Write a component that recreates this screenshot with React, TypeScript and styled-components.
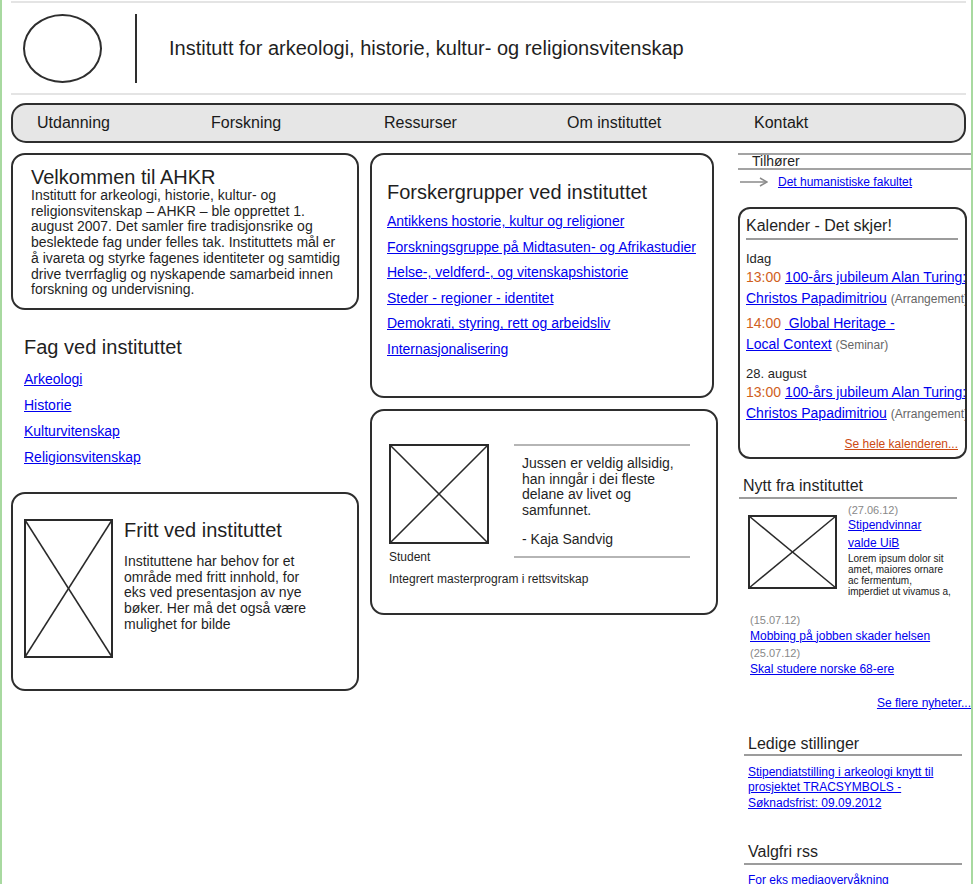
import React from 'react'
import styled, { createGlobalStyle } from 'styled-components'

const GlobalStyle = createGlobalStyle`
html, body {
  margin: 0;
  padding: 0;
  background: #fff;
}
body {
  font-family: "Liberation Sans", Arial, Helvetica, sans-serif;
  color: #1f1f1f;
}
a {
  color: #0000ee;
}
`

const Frame = styled.div`
  width: 973px;
  min-height: 884px;
  box-sizing: border-box;
  border-left: 2px solid #a8d9a0;
  border-right: 2px solid #a8d9a0;
  padding: 1px 0 0 9px;
`

const Rule = styled.div`
  height: 2px;
  margin-right: 5px;
  background: #e4e4e4;
`

const Header = styled.header`
  display: flex;
  align-items: center;
  height: 90px;
  padding-left: 12px;
`

const Logo = styled.div`
  width: 79px;
  height: 69px;
  box-sizing: border-box;
  border: 2px solid #2e2e2e;
  border-radius: 50%;
`

const Divider = styled.div`
  width: 2px;
  height: 69px;
  background: #2e2e2e;
  margin: 0 32px 0 33px;
`

const Title = styled.h1`
  margin: 0;
  font-size: 20px;
  line-height: 23px;
  font-weight: normal;
  color: #1f1f1f;
`

const Nav = styled.nav`
  margin: 8px 5px 0 0;
  height: 40px;
  box-sizing: border-box;
  border: 2px solid #2e2e2e;
  border-radius: 15px;
  background: #e6e6e6;
  display: grid;
  grid-template-columns: 174px 173px 183px 187px 1fr;
  align-items: center;
  padding: 0 0 1px 24px;
`

const NavItem = styled.a`
  font-size: 16px;
  line-height: 18px;
  color: #1a1a1a;
  text-decoration: none;
`

const Main = styled.div`
  display: grid;
  grid-template-columns: 348px 348px 1fr;
  column-gap: 11px;
  align-items: start;
  margin-top: 10px;
`

const Column = styled.div`
  display: flex;
  flex-direction: column;
`

const SideColumn = styled.aside`
  display: flex;
  flex-direction: column;
  margin-left: 9px;
`

const Card = styled.section<{ $w?: number; $h?: number }>`
  box-sizing: border-box;
  width: ${p => p.$w ?? 348}px;
  ${p => (p.$h ? `height: ${p.$h}px;` : '')}
  border: 2px solid #2e2e2e;
  border-radius: 14px;
  background: #fff;
`

const WelcomeCard = styled(Card)`
  padding: 11px 14px 10px 18px;
`

const BigHeading = styled.h2`
  margin: 0;
  font-size: 20px;
  line-height: 23px;
  font-weight: normal;
  color: #1f1f1f;
`

const Body = styled.p<{ $lh?: number }>`
  margin: 0;
  font-size: 14px;
  line-height: ${p => p.$lh ?? 16}px;
`

const WelcomeBody = styled(Body)`
  margin-top: -1px;
`

const LinkList = styled.div<{ $gap: number }>`
  display: flex;
  flex-direction: column;
  align-items: flex-start;
  gap: ${p => p.$gap}px;
  a {
    font-size: 14px;
    line-height: 16px;
  }
`

const FagSection = styled.section`
  margin-top: 26px;
  padding-left: 13px;
  ${BigHeading} {
    margin-bottom: 12px;
  }
`

const FreeCard = styled(Card)`
  margin-top: 27px;
  display: flex;
  align-items: flex-start;
  gap: 11px;
  padding: 25px 0 0 11px;
`

const FreeText = styled.div`
  width: 195px;
  ${BigHeading} {
    margin-bottom: 12px;
  }
`

const GroupCard = styled(Card)`
  padding: 26px 14px 39px 15px;
  ${BigHeading} {
    margin-bottom: 9px;
  }
`

const QuoteCard = styled(Card)`
  margin-top: 11px;
  padding: 33px 20px 27px 17px;
`

const QuoteRow = styled.div`
  display: flex;
  align-items: flex-start;
`

const Caption = styled.div`
  font-size: 12px;
  line-height: 14px;
  color: #1f1f1f;
`

const Figure = styled.div`
  display: flex;
  flex-direction: column;
  ${Caption} {
    margin-top: 6px;
  }
`

const Quote = styled.blockquote`
  margin: 0 0 0 25px;
  width: 176px;
  box-sizing: border-box;
  border-top: 2px solid #b5b5b5;
  border-bottom: 2px solid #b5b5b5;
  padding: 10px 8px 9px 8px;
  font-size: 14px;
  line-height: 15.7px;
  p {
    margin: 0;
  }
  p + p {
    margin-top: 13px;
  }
`

const Program = styled(Caption)`
  margin-top: 8px;
`

const Belongs = styled.div`
  border-top: 2px solid #a3a3a3;
  border-bottom: 2px solid #a3a3a3;
  padding-left: 14px;
  font-size: 14px;
  line-height: 13px;
`

const ArrowRow = styled.div`
  display: flex;
  align-items: center;
  gap: 10px;
  margin-top: 5px;
  padding-left: 2px;
  a {
    font-size: 12px;
    line-height: 14px;
  }
`

const CalendarCard = styled(Card)`
  margin-top: 18px;
  width: 229px;
  border-radius: 12px;
  overflow: hidden;
  padding: 8px 7px 6px 6px;
`

const SideHeading = styled.h3<{ $inset?: number; $end?: number }>`
  margin: 0 ${p => p.$end ?? 0}px 0 ${p => p.$inset ?? 0}px;
  font-size: 16px;
  line-height: 18.4px;
  font-weight: normal;
  color: #1f1f1f;
  border-bottom: 2px solid #9c9c9c;
  padding: 0 0 1px 4px;
`

const CalendarHeading = styled(SideHeading)`
  padding: 0 0 3px 0;
  margin-bottom: 2px;
`

const DayLabel = styled.div`
  margin-top: 10px;
  font-size: 13px;
  line-height: 17px;
`

const Event = styled.div`
  margin-bottom: 4px;
  font-size: 14px;
  line-height: 20.5px;
  white-space: nowrap;
`

const Time = styled.span`
  color: #d0601c;
`

const Kind = styled.span`
  font-size: 12px;
  color: #666;
`

const MoreLink = styled.a<{ $color?: string; $top: number }>`
  display: block;
  margin-top: ${p => p.$top}px;
  text-align: right;
  font-size: 12px;
  line-height: 14px;
  color: ${p => p.$color ?? '#0000ee'};
`

const Section = styled.section<{ $top: number }>`
  margin-top: ${p => p.$top}px;
`

const Featured = styled.div`
  display: flex;
  align-items: flex-start;
  margin-top: 5.5px;
  padding-left: 10px;
  svg {
    margin-top: 11px;
    flex: none;
  }
`

const FeaturedText = styled.div`
  width: 104px;
  margin-left: 11px;
  a {
    display: block;
    font-size: 12px;
    line-height: 18px;
  }
`

const NewsDate = styled.div`
  font-size: 11px;
  line-height: 12px;
  color: #888;
`

const Teaser = styled.p`
  margin: 2px 0 0;
  font-size: 10px;
  line-height: 10.8px;
  color: #1a1a1a;
`

const NewsList = styled.div`
  margin-top: 16px;
  padding-left: 12px;
  display: flex;
  flex-direction: column;
  gap: 3.7px;
  a {
    font-size: 12px;
    line-height: 14px;
  }
`

const SideLink = styled.a<{ $top: number }>`
  display: block;
  margin-top: ${p => p.$top}px;
  padding-left: 10px;
  width: 200px;
  font-size: 12px;
  line-height: 15.7px;
`

function Placeholder({ w, h }: { w: number; h: number }) {
  return (
    <svg width={w} height={h} viewBox={`0 0 ${w} ${h}`}>
      <rect x="1" y="1" width={w - 2} height={h - 2} fill="#fff" stroke="#2a2a2a" strokeWidth="2" />
      <line x1="1" y1="1" x2={w - 1} y2={h - 1} stroke="#2a2a2a" strokeWidth="1.5" />
      <line x1={w - 1} y1="1" x2="1" y2={h - 1} stroke="#2a2a2a" strokeWidth="1.5" />
    </svg>
  )
}

function Arrow() {
  return (
    <svg width="28" height="10" viewBox="0 0 28 10">
      <line x1="0" y1="5" x2="27" y2="5" stroke="#8a8a8a" strokeWidth="1.5" />
      <polyline points="20,1 27,5 20,9" fill="none" stroke="#8a8a8a" strokeWidth="1.5" />
    </svg>
  )
}

const navItems = ['Utdanning', 'Forskning', 'Ressurser', 'Om instituttet', 'Kontakt']
const subjects = ['Arkeologi', 'Historie', 'Kulturvitenskap', 'Religionsvitenskap']
const groups = [
  'Antikkens hostorie, kultur og religioner',
  'Forskningsgruppe på Midtasuten- og Afrikastudier',
  'Helse-, veldferd-, og vitenskapshistorie',
  'Steder - regioner - identitet',
  'Demokrati, styring, rett og arbeidsliv',
  'Internasjonalisering',
]

type CalEvent = { time: string; first: string; second: string; kind: string }

const today: CalEvent[] = [
  { time: '13:00', first: '100-års jubileum Alan Turing:', second: 'Christos Papadimitriou', kind: '(Arrangement)' },
  { time: '14:00', first: '\u00a0Global Heritage -', second: 'Local Context', kind: '(Seminar)' },
]
const later: CalEvent[] = [
  { time: '13:00', first: '100-års jubileum Alan Turing:', second: 'Christos Papadimitriou', kind: '(Arrangement)' },
]

const news = [
  { date: '(15.07.12)', title: 'Mobbing på jobben skader helsen' },
  { date: '(25.07.12)', title: 'Skal studere norske 68-ere' },
]

function EventItem({ ev }: { ev: CalEvent }) {
  return (
    <Event>
      <div>
        <Time>{ev.time}</Time> <a href="#">{ev.first}</a>
      </div>
      <div>
        <a href="#">{ev.second}</a> <Kind>{ev.kind}</Kind>
      </div>
    </Event>
  )
}

export default function App() {
  return (
    <>
      <GlobalStyle />
      <Frame>
        <Rule />
        <Header>
          <Logo />
          <Divider />
          <Title>Institutt for arkeologi, historie, kultur- og religionsvitenskap</Title>
        </Header>
        <Rule />
        <Nav>
          {navItems.map(item => (
            <NavItem key={item} href="#">{item}</NavItem>
          ))}
        </Nav>

        <Main>
          <Column>
            <WelcomeCard>
              <BigHeading>Velkommen til AHKR</BigHeading>
              <WelcomeBody $lh={15.7}>
                Institutt for arkeologi, historie, kultur- og religionsvitenskap – AHKR – ble opprettet 1.
                august 2007. Det samler fire tradisjonsrike og beslektede fag under felles tak. Instituttets
                mål er å ivareta og styrke fagenes identiteter og samtidig drive tverrfaglig og nyskapende
                samarbeid innen forskning og undervisning.
              </WelcomeBody>
            </WelcomeCard>

            <FagSection>
              <BigHeading>Fag ved instituttet</BigHeading>
              <LinkList $gap={10}>
                {subjects.map(s => (
                  <a key={s} href="#">{s}</a>
                ))}
              </LinkList>
            </FagSection>

            <FreeCard $h={199}>
              <Placeholder w={89} h={139} />
              <FreeText>
                <BigHeading>Fritt ved instituttet</BigHeading>
                <Body $lh={15.7}>
                  Instituttene har behov for et område med fritt innhold, for eks ved presentasjon av nye
                  bøker. Her må det også være mulighet for bilde
                </Body>
              </FreeText>
            </FreeCard>
          </Column>

          <Column>
            <GroupCard $w={344}>
              <BigHeading>Forskergrupper ved instituttet</BigHeading>
              <LinkList $gap={9.6}>
                {groups.map(g => (
                  <a key={g} href="#">{g}</a>
                ))}
              </LinkList>
            </GroupCard>

            <QuoteCard>
              <QuoteRow>
                <Figure>
                  <Placeholder w={100} h={100} />
                  <Caption>Student</Caption>
                </Figure>
                <Quote>
                  <p>Jussen er veldig allsidig, han inngår i dei fleste delane av livet og samfunnet.</p>
                  <p>- Kaja Sandvig</p>
                </Quote>
              </QuoteRow>
              <Program>Integrert masterprogram i rettsvitskap</Program>
            </QuoteCard>
          </Column>

          <SideColumn>
            <Belongs>Tilhører</Belongs>
            <ArrowRow>
              <Arrow />
              <a href="#">Det humanistiske fakultet</a>
            </ArrowRow>

            <CalendarCard>
              <CalendarHeading>Kalender - Det skjer!</CalendarHeading>
              <DayLabel>Idag</DayLabel>
              {today.map((ev, i) => (
                <EventItem key={i} ev={ev} />
              ))}
              <DayLabel>28. august</DayLabel>
              {later.map((ev, i) => (
                <EventItem key={i} ev={ev} />
              ))}
              <MoreLink href="#" $color="#cc4a12" $top={13}>
                Se hele kalenderen...
              </MoreLink>
            </CalendarCard>

            <Section $top={18}>
              <SideHeading $inset={1} $end={14}>Nytt fra instituttet</SideHeading>
              <Featured>
                <Placeholder w={89} h={74} />
                <FeaturedText>
                  <NewsDate>(27.06.12)</NewsDate>
                  <a href="#">Stipendvinnar valde UiB</a>
                  <Teaser>Lorem ipsum dolor sit amet, maiores ornare ac fermentum, imperdiet ut vivamus a,</Teaser>
                </FeaturedText>
              </Featured>
              <NewsList>
                {news.map(n => (
                  <div key={n.date}>
                    <NewsDate>{n.date}</NewsDate>
                    <a href="#">{n.title}</a>
                  </div>
                ))}
              </NewsList>
              <MoreLink href="#" $top={19}>Se flere nyheter...</MoreLink>
            </Section>

            <Section $top={24.5}>
              <SideHeading $inset={6} $end={9}>Ledige stillinger</SideHeading>
              <SideLink href="#" $top={8.5}>
                Stipendiatstilling i arkeologi knytt til prosjektet TRACSYMBOLS - Søknadsfrist: 09.09.2012
              </SideLink>
            </Section>

            <Section $top={31.5}>
              <SideHeading $inset={6} $end={9}>Valgfri rss</SideHeading>
              <SideLink href="#" $top={8.5}>For eks mediaovervåkning</SideLink>
            </Section>
          </SideColumn>
        </Main>
      </Frame>
    </>
  )
}
